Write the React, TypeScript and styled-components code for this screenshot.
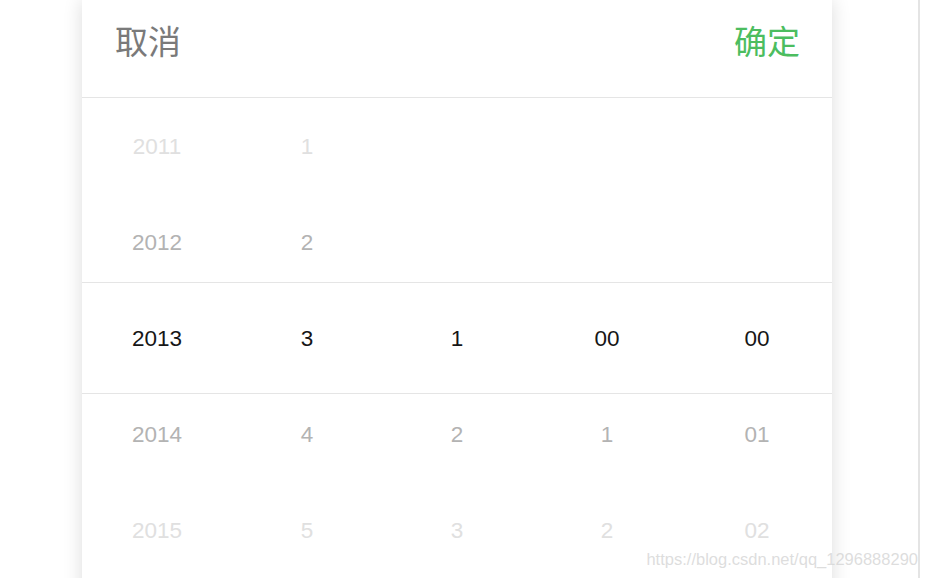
import * as React from 'react';
import { createGlobalStyle, styled } from 'styled-components';

const GlobalStyle = createGlobalStyle`
  html, body {
    margin: 0;
    padding: 0;
    background: #fff;
    overflow: hidden;
  }
  body {
    font-family: 'Liberation Sans', 'Noto Sans CJK SC', sans-serif;
  }
`;

const Page = styled.div`
  position: relative;
  display: flex;
  width: 918px;
  height: 578px;
  border-right: 2px solid #e4e4e4;
  overflow: hidden;
`;

const Panel = styled.div`
  position: relative;
  margin-left: 82px;
  width: 750px;
  height: 620px;
  background: #fff;
  box-shadow: 0 0 18px rgba(0, 0, 0, 0.14);
  display: flex;
  flex-direction: column;
`;

const Header = styled.div`
  display: flex;
  justify-content: space-between;
  align-items: center;
  height: 98px;
  box-sizing: border-box;
  padding: 0 32px 17px 33px;
  border-bottom: 1px solid #e5e5e5;
`;

const HeaderButton = styled.button<{ $primary?: boolean }>`
  border: 0;
  background: none;
  padding: 0;
  font-family: 'Noto Sans CJK SC', sans-serif;
  font-size: 33px;
  line-height: 40px;
  color: ${(p) => (p.$primary ? '#4cbd5f' : '#7a7a7a')};
  cursor: pointer;
`;

const Body = styled.div`
  position: relative;
  display: grid;
  grid-template-columns: repeat(5, 1fr);
`;

const Column = styled.div`
  display: flex;
  flex-direction: column;
`;

const Cell = styled.div<{ $dist: number }>`
  height: 96px;
  box-sizing: border-box;
  padding-top: 2px;
  display: flex;
  align-items: center;
  justify-content: center;
  font-size: 22.5px;
  color: ${(p) =>
    p.$dist === 0 ? '#161616' : p.$dist === 1 ? '#b3b3b3' : '#e0e0e0'};
`;

const Indicator = styled.div`
  position: absolute;
  left: 0;
  right: 0;
  top: 184px;
  height: 110px;
  border-top: 1px solid #e5e5e5;
  border-bottom: 1px solid #e5e5e5;
  pointer-events: none;
`;

const Watermark = styled.div`
  position: absolute;
  right: 0;
  top: 550px;
  font-family: 'Liberation Sans', sans-serif;
  font-size: 16.5px;
  color: rgba(210, 210, 210, 0.75);
  white-space: nowrap;
  pointer-events: none;
`;

const columns: string[][] = [
  ['2011', '2012', '2013', '2014', '2015'],
  ['1', '2', '3', '4', '5'],
  ['', '', '1', '2', '3'],
  ['', '', '00', '1', '2'],
  ['', '', '00', '01', '02'],
];

export default function App() {
  return (
    <>
      <GlobalStyle />
      <Page>
        <Panel>
          <Header>
            <HeaderButton>取消</HeaderButton>
            <HeaderButton $primary>确定</HeaderButton>
          </Header>
          <Body>
            {columns.map((col, ci) => (
              <Column key={ci}>
                {col.map((v, ri) => (
                  <Cell key={ri} $dist={Math.abs(ri - 2)}>
                    {v}
                  </Cell>
                ))}
              </Column>
            ))}
            <Indicator />
          </Body>
        </Panel>
        <Watermark>https://blog.csdn.net/qq_1296888290</Watermark>
      </Page>
    </>
  );
}
